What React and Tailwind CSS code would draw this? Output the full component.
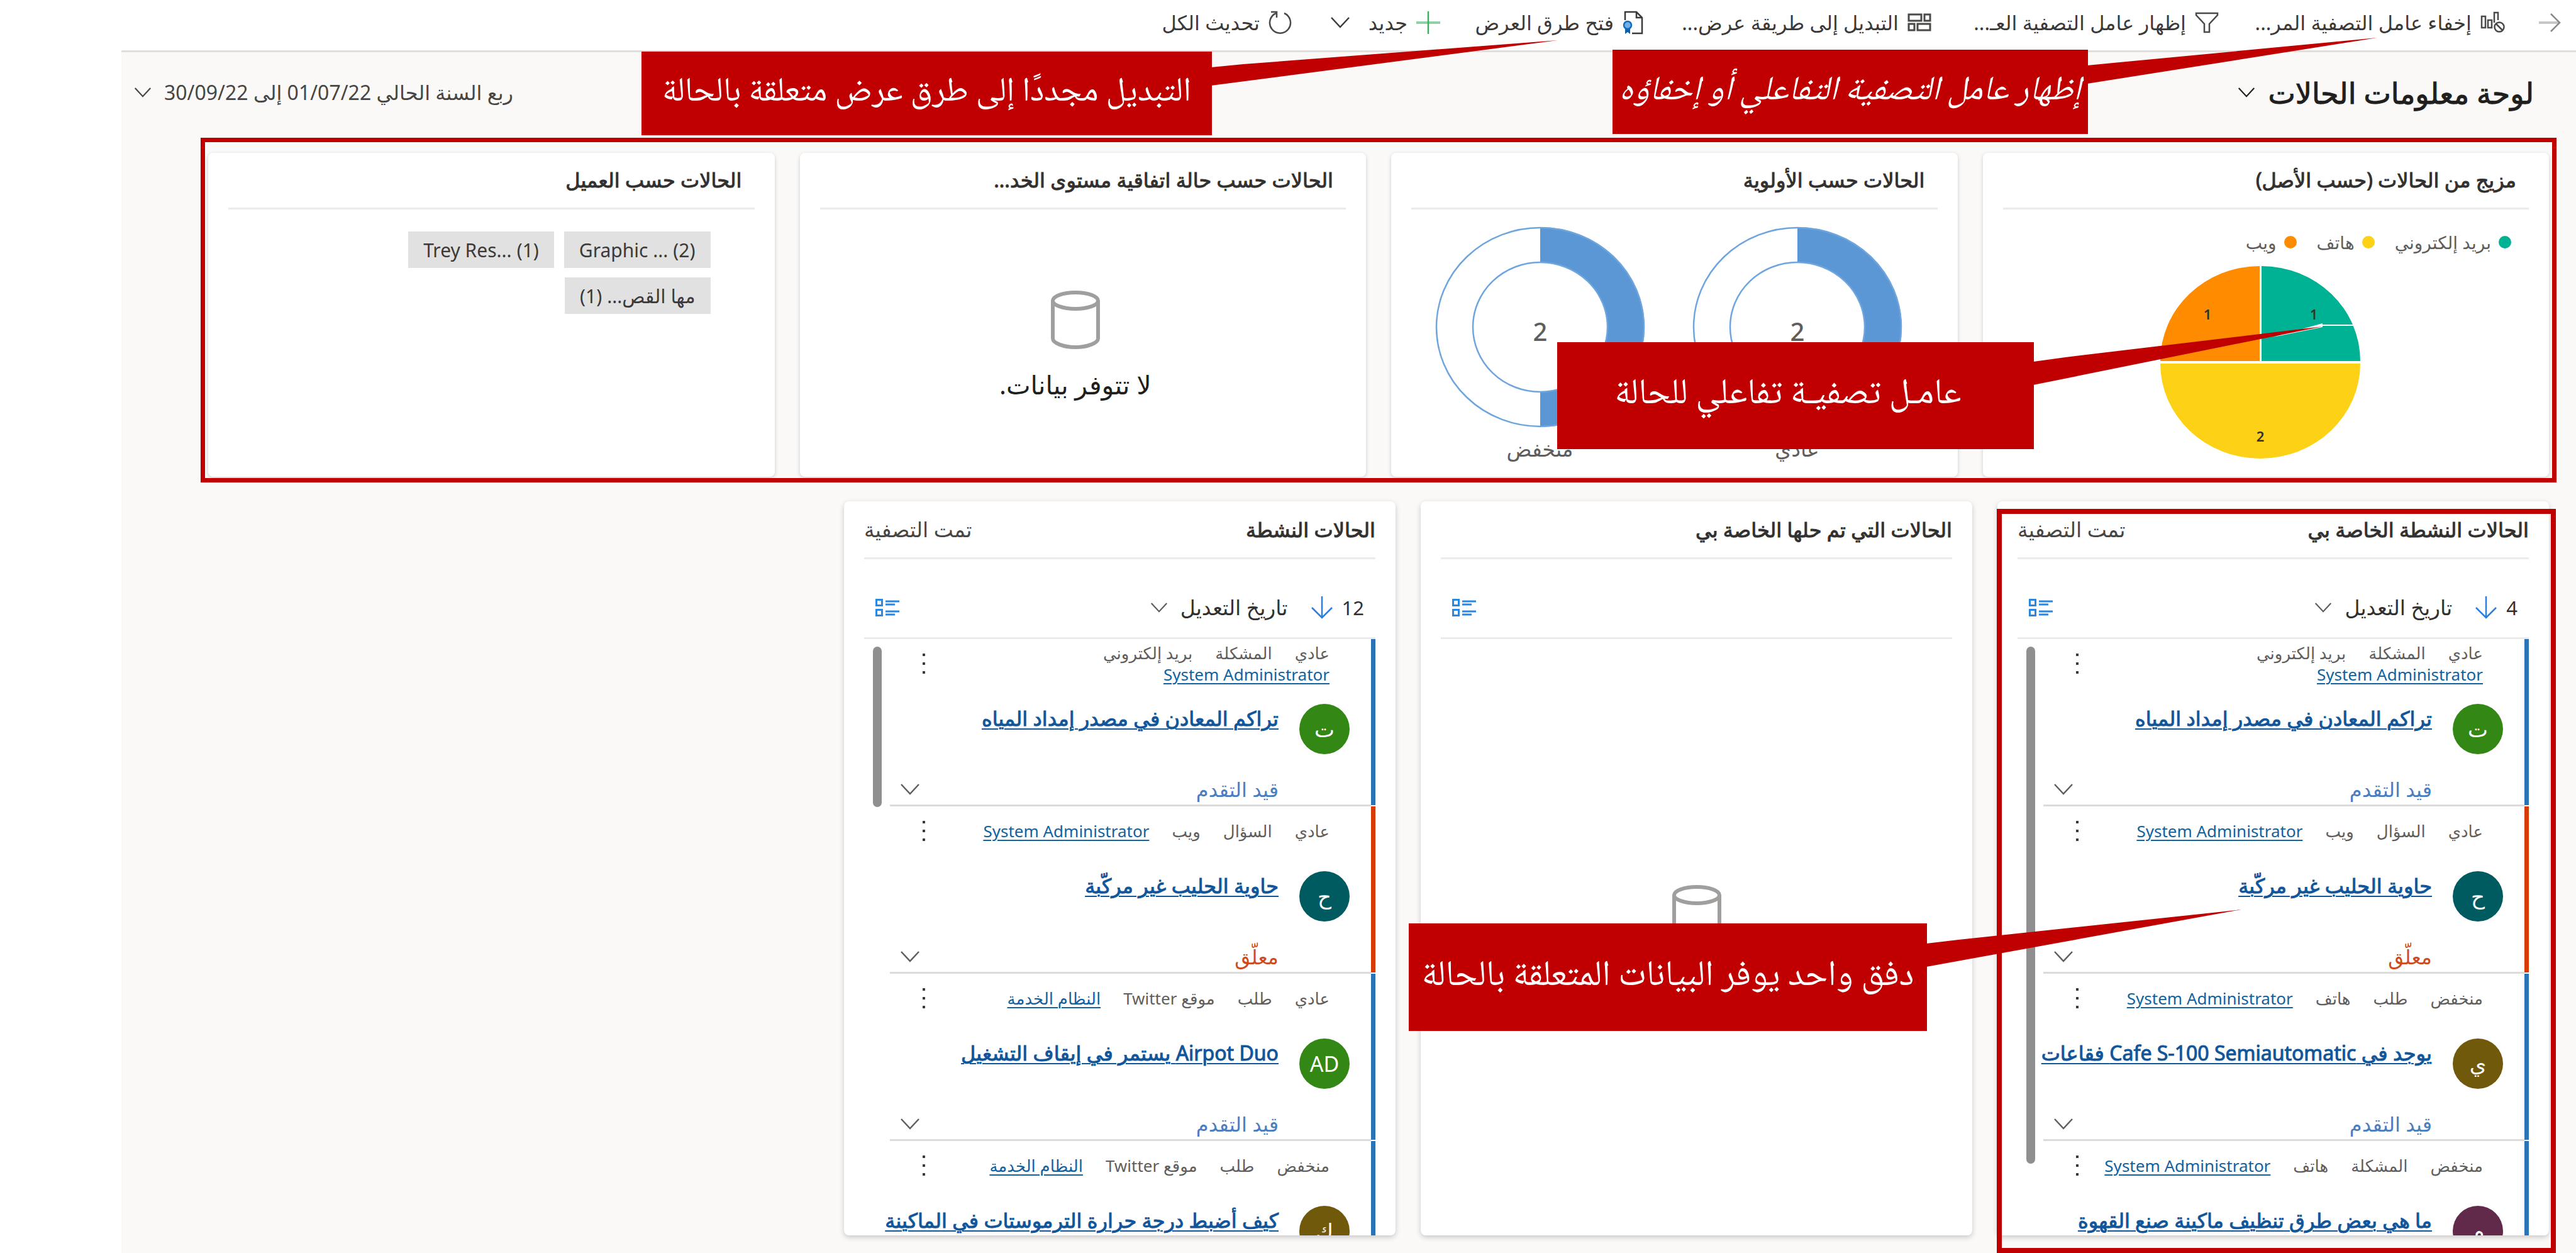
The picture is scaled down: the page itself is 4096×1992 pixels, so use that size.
const UI = 'font-["Noto_Sans","DejaVu_Sans",sans-serif]';
const NOTE = 'font-["Noto_Naskh_Arabic","Amiri","Scheherazade_New","DejaVu_Sans","Liberation_Serif",serif]';

function Chevron({ className }) {
  return (
    <svg viewBox="0 0 32 20" className={className} fill="none" stroke="currentColor" strokeWidth="2.5" aria-hidden="true">
      <path d="M2 2 L16 17 L30 2" />
    </svg>
  );
}

function ArrowIcon() {
  return (
    <svg viewBox="0 0 36 32" className="h-8 w-9" fill="none" aria-hidden="true">
      <path d="M1 16 H34" stroke="#c8c6c4" strokeWidth="4" />
      <path d="M20 2 L34 16 L20 30" stroke="#8a8886" strokeWidth="2.5" />
    </svg>
  );
}

function HideChartIcon() {
  return (
    <svg viewBox="0 0 40 36" className="h-9 w-10" fill="none" stroke="#4b4a49" strokeWidth="2.5" aria-hidden="true">
      <rect x="2" y="8" width="6" height="18" />
      <rect x="12" y="14" width="6" height="12" />
      <path d="M22 18 V2 h6 v12" />
      <circle cx="30" cy="25" r="7.5" />
      <path d="M25 20 L35 30" />
    </svg>
  );
}

function FilterIcon() {
  return (
    <svg viewBox="0 0 38 36" className="h-9 w-[38px]" fill="none" stroke="#4b4a49" strokeWidth="2.5" aria-hidden="true">
      <path d="M2 3 H36 V6 L23 20 V33 H15 V20 L2 6 Z" />
    </svg>
  );
}

function LayoutIcon() {
  return (
    <svg viewBox="0 0 38 30" className="h-[30px] w-[38px]" fill="none" stroke="#4b4a49" strokeWidth="3" aria-hidden="true">
      <rect x="2" y="2" width="20" height="10" />
      <rect x="27" y="2" width="9" height="10" />
      <rect x="2" y="17" width="9" height="10" />
      <rect x="16" y="17" width="20" height="10" />
    </svg>
  );
}

function ViewsIcon() {
  return (
    <svg viewBox="0 0 34 38" className="h-[38px] w-[34px]" fill="none" aria-hidden="true">
      <path d="M4 15 V2 H22 L31 11 V36 H15" stroke="#3b3a39" strokeWidth="2.5" />
      <path d="M22 2 V11 H31" stroke="#3b3a39" strokeWidth="2.5" />
      <path d="M4 27 V37 L8 34 L12 37 V27 Z" fill="#0f5ea8" />
      <circle cx="8" cy="23" r="6" fill="#71afe5" stroke="#0f6cbd" strokeWidth="2.5" />
    </svg>
  );
}

function PlusIcon() {
  return (
    <svg viewBox="0 0 38 36" className="h-9 w-[38px]" fill="none" aria-hidden="true">
      <path d="M0 18 H38" stroke="#8fd0a4" strokeWidth="4" />
      <path d="M19 0 V36" stroke="#3fae60" strokeWidth="2.5" />
    </svg>
  );
}

function RefreshIcon() {
  return (
    <svg viewBox="0 0 38 38" className="h-[38px] w-[38px]" fill="none" stroke="#4b4a49" strokeWidth="2.5" aria-hidden="true">
      <path d="M25 4 A 16.5 16.5 0 1 1 12 4" />
      <path d="M4 2 H13 V11" />
    </svg>
  );
}

function ListIcon() {
  return (
    <svg viewBox="0 0 38 28" className="h-7 w-[38px]" fill="none" stroke="#2b88e0" aria-hidden="true">
      <rect x="1.5" y="1.5" width="9" height="9" strokeWidth="3" />
      <rect x="1.5" y="17.5" width="9" height="9" strokeWidth="3" />
      <path d="M16 4 H38 M16 9 H31 M16 20 H38 M16 25 H31" strokeWidth="3" />
    </svg>
  );
}

function DownArrow() {
  return (
    <svg viewBox="0 0 36 36" className="h-9 w-9" fill="none" stroke="#2b7de0" strokeWidth="2.5" aria-hidden="true">
      <path d="M18 0 V34 M2 18 L18 34 L34 18" />
    </svg>
  );
}

function Cylinder() {
  return (
    <svg viewBox="0 0 80 94" className="h-[94px] w-20" fill="none" stroke="#a19f9d" strokeWidth="6" aria-hidden="true">
      <ellipse cx="40" cy="17" rx="36" ry="13" />
      <path d="M4 17 V77 C4 84 20 91 40 91 C60 91 76 84 76 77 V17" />
    </svg>
  );
}

function NoData() {
  return (
    <div className="flex flex-col items-center gap-6">
      <Cylinder />
      <p className="text-[41px] leading-[64px] text-[#201f1e]">لا تتوفر بيانات.</p>
    </div>
  );
}

function Command({ icon, children, className }) {
  return (
    <button type="button" className={"flex items-center gap-[14px] whitespace-nowrap " + (className || "")}>
      {icon}
      <span>{children}</span>
    </button>
  );
}

function CommandBar() {
  return (
    <nav aria-label="شريط الأوامر" className="flex h-[83px] items-center border-b-[3px] border-[#e1dfdd] bg-white pb-2 ps-6 text-[32px] text-[#3b3a39]">
      <button type="button" aria-label="رجوع" className="me-[52px]"><ArrowIcon /></button>
      <Command icon={<HideChartIcon />} className="w-[456px]">إخفاء عامل التصفية المر...</Command>
      <Command icon={<FilterIcon />} className="w-[457px]">إظهار عامل التصفية العـ...</Command>
      <Command icon={<LayoutIcon />} className="w-[457px]">التبديل إلى طريقة عرض...</Command>
      <Command icon={<ViewsIcon />} className="w-[324px]">فتح طرق العرض</Command>
      <Command icon={<PlusIcon />} className="w-[141px]">جديد</Command>
      <button type="button" aria-label="المزيد" className="w-[94px]"><Chevron className="h-5 w-9" /></button>
      <Command icon={<RefreshIcon />}>تحديث الكل</Command>
    </nav>
  );
}

function ChartCard({ title, children }) {
  return (
    <article className="flex h-[515px] min-w-0 flex-col rounded-lg bg-white px-8 shadow-[0_2px_6px_rgba(0,0,0,0.18)]">
      <h2 className="h-[90px] truncate border-b-[3px] border-[#edebe9] px-5 text-[32px] leading-[86px] text-[#323130] [-webkit-text-stroke:1px]">{title}</h2>
      {children}
    </article>
  );
}

const LEGEND = [
  { label: "بريد إلكتروني", dot: "bg-[#00b294]" },
  { label: "هاتف", dot: "bg-[#fcd116]" },
  { label: "ويب", dot: "bg-[#ff8c00]" },
];

function OriginPie() {
  return (
    <div className="flex flex-col">
      <ul className="mt-8 flex h-10 items-center gap-8 ps-7 text-[28px] text-[#605e5c]">
        {LEGEND.map((l) => (
          <li key={l.label} className="flex items-center gap-3">
            <span className={"h-5 w-5 rounded-full " + l.dot} />
            {l.label}
          </li>
        ))}
      </ul>
      <svg viewBox="0 0 318 306" className="mt-[18px] ms-[268px] h-[306px] w-[318px]" role="img" aria-label="مزيج من الحالات">
        <path d="M161 151 V0 A157 151 0 0 1 318 151 Z" fill="#00b294" />
        <path d="M158 151 V0 A158 151 0 0 0 0 151 Z" fill="#ff8c00" />
        <path d="M0 155 H318 A159 151 0 0 1 0 155 Z" fill="#fcd116" />
        <g fill="#323130" fontSize="22" fontWeight="600" textAnchor="middle">
          <text x="75" y="85">1</text>
          <text x="244" y="85">1</text>
          <text x="159" y="279">2</text>
        </g>
      </svg>
    </div>
  );
}

function Donut({ value, label }) {
  return (
    <figure className="flex w-[334px] flex-col items-center">
      <svg viewBox="0 0 334 320" className="h-80 w-[334px]" role="img" aria-label={label}>
        <path d="M167 1 A166 159 0 0 1 167 319 V263 A107 103 0 0 0 167 57 Z" fill="#5b97d5" />
        <ellipse cx="167" cy="160" rx="165" ry="158" fill="none" stroke="#6ea5de" strokeWidth="2.5" />
        <ellipse cx="167" cy="160" rx="107" ry="103" fill="none" stroke="#6ea5de" strokeWidth="2.5" />
        <text x="167" y="182" fontSize="40" fontWeight="500" fill="#605e5c" textAnchor="middle">{value}</text>
      </svg>
      <figcaption className="mt-2 text-[33px] leading-[52px] text-[#605e5c]">{label}</figcaption>
    </figure>
  );
}

function Chip({ name, count, dir }) {
  return (
    <button type="button" dir={dir} className="flex h-[58px] items-center gap-2 bg-[#e1e1e1] px-6 text-[30px] text-[#3b3a39]">
      <span>{name}</span>
      <span>({count})</span>
    </button>
  );
}

const BAR = { blue: "bg-[#2b73b7]", red: "bg-[#d83b01]" };
const STATUS = { blue: "text-[#4a7ebf]", red: "text-[#d04a20]" };

function CaseItem({ meta, owner, title, initials, avatar, tone, status, wrap }) {
  return (
    <li className="flex h-[266px] shrink-0">
      <span className={"mb-[2px] w-[7px] shrink-0 " + BAR[tone]} />
      <div className="flex min-w-0 grow flex-col border-b-[3px] border-[#dddbd9] ps-[34px]">
        <div className="flex h-20 items-center justify-between ps-8 pe-[48px]">
          <div className={"flex max-w-[520px] items-center gap-x-9 text-[26px] leading-[34px] text-[#605e5c] " + (wrap ? "flex-wrap" : "whitespace-nowrap")}>
            {meta.map((m) => (
              <span key={m}>{m}</span>
            ))}
            <a href="#owner" className="text-[#11629f] underline decoration-2 underline-offset-4">{owner}</a>
          </div>
          <button type="button" aria-label="المزيد من الأوامر" className="flex flex-col gap-[10px] px-1">
            <span className="h-1 w-1 bg-[#3b3a39]" />
            <span className="h-1 w-1 bg-[#3b3a39]" />
            <span className="h-1 w-1 bg-[#3b3a39]" />
          </button>
        </div>
        <div className="mt-[26px] flex h-20 gap-[33px]">
          <span className={"flex h-20 w-20 shrink-0 items-center justify-center rounded-full text-[34px] text-white " + avatar}>{initials}</span>
          <a href="#case" className="h-14 text-[32px] leading-[46px] whitespace-nowrap text-[#11569a] underline decoration-2 underline-offset-4 [-webkit-text-stroke:1px]">{title}</a>
        </div>
        <div className="mt-8 flex h-12 items-center justify-between ps-[113px] pe-4 text-[32px]">
          <span className={STATUS[tone]}>{status}</span>
          <button type="button" aria-label="توسيع"><Chevron className="h-5 w-8 text-[#605e5c]" /></button>
        </div>
      </div>
    </li>
  );
}

function StreamCard({ title, filtered, count, items, thumb, framed }) {
  return (
    <article className="relative min-w-0">
      <div className="flex h-[1167px] flex-col overflow-hidden rounded-lg bg-white px-8 shadow-[0_3px_8px_rgba(0,0,0,0.2)]">
        <header className="flex h-[92px] shrink-0 items-center justify-between border-b-[3px] border-[#edebe9]">
          <h2 className="text-[32px] text-[#323130] [-webkit-text-stroke:1px]">{title}</h2>
          {filtered && <span className="text-[33px] text-[#484644]">تمت التصفية</span>}
        </header>
        <div className="flex h-[127px] shrink-0 items-center border-b-[3px] border-[#edebe9] ps-[18px] pe-[18px] pt-[30px] text-[#323130]">
          {count && (
            <>
              <span className="text-[31px]">{count}</span>
              <button type="button" aria-label="اتجاه الفرز" className="ms-[14px]"><DownArrow /></button>
              <button type="button" className="ms-9 flex items-center gap-5 text-[33px]">
                تاريخ التعديل
                <Chevron className="h-[18px] w-7 text-[#605e5c]" />
              </button>
            </>
          )}
          <button type="button" aria-label="تغيير العرض" className="ms-auto"><ListIcon /></button>
        </div>
        {items ? (
          <div className="flex min-h-0 grow">
            <ul className="flex min-w-0 grow flex-col">
              {items.map((it) => (
                <CaseItem key={it.title} {...it} />
              ))}
            </ul>
            <div className="w-[41px] shrink-0 ps-[13px] pt-3">
              <div className={"w-[14px] rounded-full bg-[#8f8f8f] " + thumb} />
            </div>
          </div>
        ) : (
          <div className="flex grow flex-col items-center pt-[390px]">
            <NoData />
          </div>
        )}
      </div>
      {framed && <div className="pointer-events-none absolute -start-[11px] -end-px top-3 -bottom-7 border-8 border-[#c00000]" />}
    </article>
  );
}

const ADMIN = "System Administrator";

const FIRST = [
  { meta: ["عادي", "المشكلة", "بريد إلكتروني"], owner: ADMIN, title: "تراكم المعادن في مصدر إمداد المياه", initials: "ت", avatar: "bg-[#338714]", tone: "blue", status: "قيد التقدم", wrap: true },
  { meta: ["عادي", "السؤال", "ويب"], owner: ADMIN, title: "حاوية الحليب غير مركّبة", initials: "ح", avatar: "bg-[#005b60]", tone: "red", status: "معلّق" },
];

const MINE = [
  ...FIRST,
  { meta: ["منخفض", "طلب", "هاتف"], owner: ADMIN, title: "يوجد في Cafe S-100 Semiautomatic فقاعات", initials: "ي", avatar: "bg-[#70590a]", tone: "blue", status: "قيد التقدم" },
  { meta: ["منخفض", "المشكلة", "هاتف"], owner: ADMIN, title: "ما هي بعض طرق تنظيف ماكينة صنع القهوة", initials: "م", avatar: "bg-[#622a4a]", tone: "blue", status: "قيد التقدم" },
];

const ACTIVE = [
  ...FIRST,
  { meta: ["عادي", "طلب", "موقع Twitter"], owner: "النظام الخدمة", title: "Airpot Duo يستمر في إيقاف التشغيل", initials: "AD", avatar: "bg-[#338714]", tone: "blue", status: "قيد التقدم" },
  { meta: ["منخفض", "طلب", "موقع Twitter"], owner: "النظام الخدمة", title: "كيف أضبط درجة حرارة الترموستات في الماكينة", initials: "ك", avatar: "bg-[#70590a]", tone: "blue", status: "قيد التقدم" },
];

function Callout({ children, place, tail, points, text, glint }) {
  return (
    <aside className={"absolute flex items-center justify-center bg-[#c00000] whitespace-nowrap text-white " + NOTE + " " + place + " " + text}>
      {children}
      <svg className={"absolute left-full overflow-visible " + tail} fill="#c00000" aria-hidden="true">
        {glint && <path d="M380 -8 L459 -30 V-24 Z M459 -28 H508 V-26 H459 Z" fill="#ffffff" />}
        <polygon points={points} />
      </svg>
    </aside>
  );
}

export default function App() {
  return (
    <div dir="rtl" className={"relative min-h-screen overflow-hidden bg-white pe-[193px] " + UI}>
      <CommandBar />
      <main className="bg-[#faf9f8] ps-[43px] pb-7">
        <div className="flex h-[160px] items-center justify-between ps-6 pe-5 pb-8">
          <h1>
            <button type="button" className="flex items-center gap-5 text-[46px] text-[#201f1e] [-webkit-text-stroke:1px]">
              لوحة معلومات الحالات
              <Chevron className="h-[18px] w-7" />
            </button>
          </h1>
          <button type="button" className="flex items-center gap-5 text-[32px] text-[#484644]">
            <span>ربع السنة الحالي 01/07/22 إلى 30/09/22</span>
            <Chevron className="h-[18px] w-7" />
          </button>
        </div>
        <section className="relative me-[138px] grid grid-cols-4 gap-10">
          <ChartCard title="مزيج من الحالات (حسب الأصل)">
            <OriginPie />
          </ChartCard>
          <ChartCard title="الحالات حسب الأولوية">
            <div className="flex gap-[75px] ps-[56px] pt-[27px]">
              <Donut value="2" label="عادي" />
              <Donut value="2" label="منخفض" />
            </div>
          </ChartCard>
          <ChartCard title="الحالات حسب حالة اتفاقية مستوى الخد...">
            <div className="flex justify-center pt-[128px] ps-6">
              <NoData />
            </div>
          </ChartCard>
          <ChartCard title="الحالات حسب العميل">
            <div className="flex flex-wrap gap-x-4 gap-y-[15px] ps-[70px] pe-[160px] pt-[35px]">
              <Chip dir="ltr" name="Graphic ..." count="2" />
              <Chip dir="ltr" name="Trey Res..." count="1" />
              <Chip dir="rtl" name="مها القص..." count="1" />
            </div>
          </ChartCard>
          <div className="pointer-events-none absolute -start-3 -end-3 -top-6 -bottom-[9px] border-[7px] border-[#c00000]" />
        </section>
        <section className="me-[138px] mt-[39px] grid grid-cols-[877fr_877fr_877fr_971fr] gap-10">
          <StreamCard title="الحالات النشطة الخاصة بي" filtered count="4" items={MINE} thumb="h-[822px]" framed />
          <StreamCard title="الحالات التي تم حلها الخاصة بي" />
          <StreamCard title="الحالات النشطة" filtered count="12" items={ACTIVE} thumb="h-[255px]" />
        </section>
      </main>

      <Callout place="top-[79px] right-[776px] h-[134px] w-[756px]" tail="top-0 h-[134px] w-[460px]" points="-1,25 40,21 460,-19 -1,54" text="text-[54px] italic">
        إظهار عامل التصفية التفاعلي أو إخفاؤه
      </Callout>
      <Callout place="top-[82px] right-[2169px] h-[133px] w-[907px]" tail="top-0 h-[133px] w-[550px]" points="-1,25 50,20 550,-18 -1,54" text="text-[54px]">
        التبديل مجددًا إلى طرق عرض متعلقة بالحالة
      </Callout>
      <Callout place="top-[544px] right-[862px] h-[170px] w-[758px]" tail="top-0 h-[170px] w-[459px]" points="-1,31 50,24 459,-25 -1,68" text="pr-6 text-[57px]" glint>
        عامـل تصفيـة تفاعلي للحالة
      </Callout>
      <Callout place="top-[1468px] right-[1032px] h-[171px] w-[824px]" tail="top-0 h-[171px] w-[500px]" points="-1,32 50,26 500,-22 -1,69" text="text-[57px]">
        دفق واحد يوفر البيانات المتعلقة بالحالة
      </Callout>
    </div>
  );
}
